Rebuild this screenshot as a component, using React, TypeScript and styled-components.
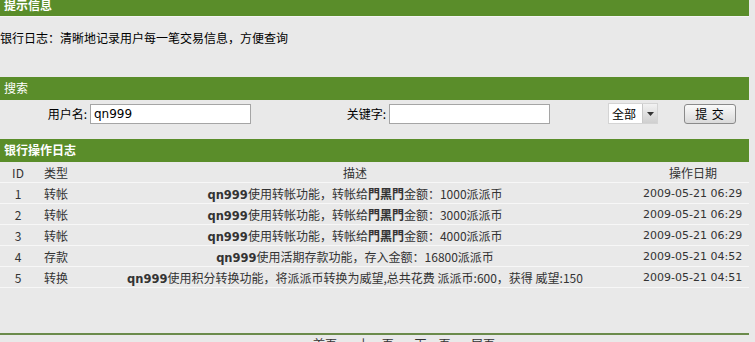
import type { FC } from 'react'
import styled, { createGlobalStyle } from 'styled-components'

const GlobalStyle = createGlobalStyle`
  html, body {
    margin: 0;
    padding: 0;
    background: #e9e9e9;
    overflow: hidden;
  }
  body {
    font-family: "Noto Sans CJK SC", "DejaVu Sans", sans-serif;
    font-size: 12px;
    color: #000;
  }
`

type LogRow = {
  id: number
  type: string
  pre: string
  target?: string
  post: string
  date: string
}

const rows: LogRow[] = [
  { id: 1, type: '转帐', pre: '使用转帐功能，转帐给', target: '門黑門', post: '金额：1000派派币', date: '2009-05-21 06:29' },
  { id: 2, type: '转帐', pre: '使用转帐功能，转帐给', target: '門黑門', post: '金额：3000派派币', date: '2009-05-21 06:29' },
  { id: 3, type: '转帐', pre: '使用转帐功能，转帐给', target: '門黑門', post: '金额：4000派派币', date: '2009-05-21 06:29' },
  { id: 4, type: '存款', pre: '使用活期存款功能，存入金额：16800派派币', post: '', date: '2009-05-21 04:52' },
  { id: 5, type: '转换', pre: '使用积分转换功能，将派派币转换为威望,总共花费 派派币:600，获得 威望:150', post: '', date: '2009-05-21 04:51' },
]

const App: FC = () => {
  return (
    <Page>
      <GlobalStyle />
      <SectionBar $bold>提示信息</SectionBar>
      <InfoBlock>银行日志：清晰地记录用户每一笔交易信息，方便查询</InfoBlock>

      <SectionBar>搜索</SectionBar>
      <SearchRow>
        <SearchLabel $width={90}>用户名:</SearchLabel>
        <SearchCell $width={255}>
          <TextInput defaultValue="qn999" />
        </SearchCell>
        <SearchLabel $width={44}>关键字:</SearchLabel>
        <SearchCell $width={219}>
          <TextInput defaultValue="" />
        </SearchCell>
        <SearchCell $width={76}>
          <SelectBox>
            <SelectText>全部</SelectText>
            <SelectArrow>
              <svg width="7" height="4" viewBox="0 0 7 4">
                <path d="M0 0h7L3.5 4z" fill="#333" />
              </svg>
            </SelectArrow>
          </SelectBox>
        </SearchCell>
        <SubmitButton>提 交</SubmitButton>
      </SearchRow>

      <SectionBar $bold $top={13}>银行操作日志</SectionBar>
      <LogTable>
        <HeadRow>
          <IdCell>ID</IdCell>
          <TypeCell>类型</TypeCell>
          <DescCell>描述</DescCell>
          <DateHead>操作日期</DateHead>
        </HeadRow>
        {rows.map((r) => (
          <BodyRow key={r.id}>
            <IdCell>{r.id}</IdCell>
            <TypeCell>{r.type}</TypeCell>
            <DescCell>
              <UserName>qn999</UserName>
              {r.pre}
              {r.target && <Target>{r.target}</Target>}
              {r.post}
            </DescCell>
            <DateCell>{r.date}</DateCell>
          </BodyRow>
        ))}
      </LogTable>

      <Footer>
        <Pager>首页 上一页 下一页 尾页</Pager>
      </Footer>
    </Page>
  )
}

export default App

const Page = styled.div`
  width: 749px;
  margin-top: -6px;
`

const SectionBar = styled.div<{ $bold?: boolean; $top?: number }>`
  height: 22px;
  line-height: 22px;
  margin-top: ${(p) => p.$top ?? 0}px;
  padding-left: 4px;
  background: #5a8d2a;
  color: #fff;
  font-weight: ${(p) => (p.$bold ? 'bold' : 'normal')};
  border-bottom: 1px solid #5a8d2a;
`

const InfoBlock = styled.div`
  height: 46px;
  padding-top: 14px;
  line-height: 14px;
  border-top: 1px solid #f4f4f4;
  box-sizing: content-box;
  margin-top: -1px;
`

const SearchRow = styled.div`
  display: flex;
  align-items: center;
  height: 25px;
  padding-top: 1px;
`

const SearchLabel = styled.div<{ $width: number }>`
  width: ${(p) => p.$width}px;
  box-sizing: border-box;
  padding-right: 3px;
  text-align: right;
  flex: none;
`

const SearchCell = styled.div<{ $width: number }>`
  width: ${(p) => p.$width}px;
  flex: none;
  display: flex;
  align-items: center;
`

const TextInput = styled.input`
  width: 161px;
  height: 20px;
  box-sizing: border-box;
  border: 1px solid #a5a5a5;
  background: #fff;
  padding: 0 3px;
  font-family: "DejaVu Sans", sans-serif;
  font-size: 12px;
  color: #000;
  outline: none;
`

const SelectBox = styled.div`
  width: 50px;
  height: 21px;
  box-sizing: border-box;
  display: flex;
  background: #fff;
  border: 1px solid #d4d4d4;
`

const SelectText = styled.div`
  flex: 1;
  line-height: 19px;
  padding-left: 3px;
`

const SelectArrow = styled.div`
  width: 14px;
  display: flex;
  align-items: center;
  justify-content: center;
  background: linear-gradient(#f2f2f2, #cfcfcf);
  border-left: 1px solid #c8c8c8;
`

const SubmitButton = styled.button`
  width: 52px;
  height: 20px;
  padding: 0;
  border: 1px solid #8a8a8a;
  border-radius: 3px;
  background: linear-gradient(#fafafa, #dadada);
  font-family: "Noto Sans CJK SC", sans-serif;
  font-size: 12px;
  color: #000;
  letter-spacing: 1px;
`

const LogTable = styled.div`
  display: flex;
  flex-direction: column;
`

const Row = styled.div`
  display: grid;
  grid-template-columns: 36px 67px 504px 30px 112px;
  align-items: center;
  color: #333;
`

const HeadRow = styled(Row)`
  height: 20px;
  border-bottom: 1px solid #f7f7f7;
`

const BodyRow = styled(Row)`
  height: 20px;
  border-bottom: 1px solid #f7f7f7;
`

const IdCell = styled.div`
  text-align: center;
`

const TypeCell = styled.div`
  padding-left: 8px;
`

const DescCell = styled.div`
  text-align: center;
  white-space: nowrap;
`

const UserName = styled.span`
  font-family: "DejaVu Sans", sans-serif;
  font-weight: bold;
  font-size: 11.5px;
  color: #333;
`

const Target = styled.span`
  font-weight: bold;
`

const DateHead = styled.div`
  grid-column: 5;
  text-align: center;
`

const DateCell = styled.div`
  grid-column: 5;
  font-family: "DejaVu Sans", sans-serif;
  font-size: 11px;
  padding-left: 6px;
`

const Footer = styled.div`
  margin-top: 45px;
  border-top: 2px solid #6b8b4b;
`

const Pager = styled.div`
  line-height: 14px;
  padding-top: 2px;
  padding-left: 313px;
  word-spacing: 18px;
  color: #333;
`
